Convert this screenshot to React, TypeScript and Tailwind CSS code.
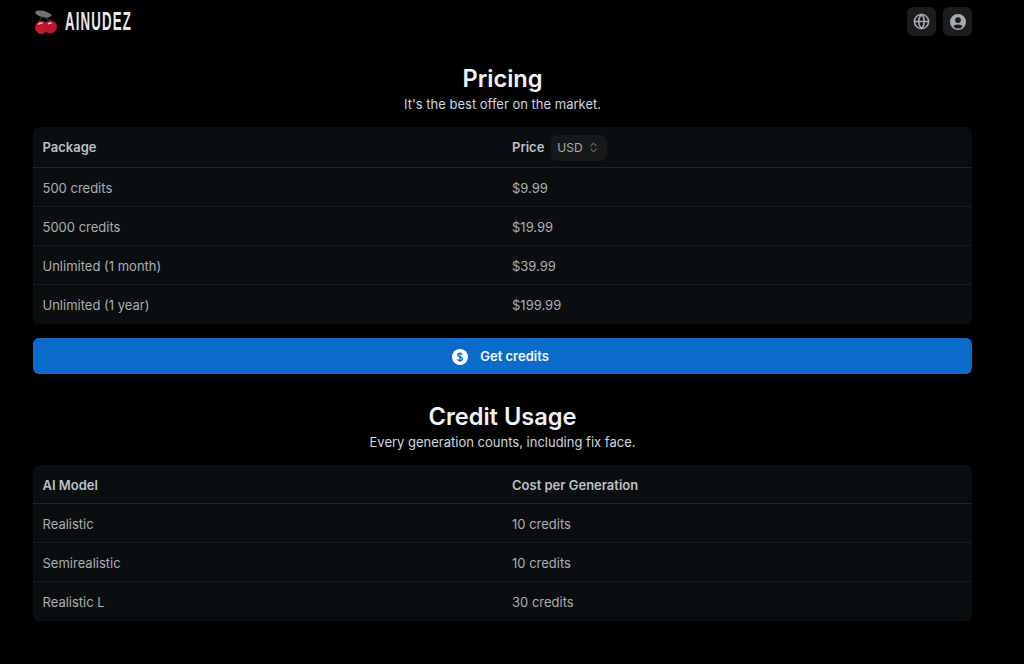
import React from "react";
import { ChevronsUpDown, Globe } from "lucide-react";

const PRICES = [
	["500 credits", "$9.99"],
	["5000 credits", "$19.99"],
	["Unlimited (1 month)", "$39.99"],
	["Unlimited (1 year)", "$199.99"],
];

const USAGE = [
	["Realistic", "10 credits"],
	["Semirealistic", "10 credits"],
	["Realistic L", "30 credits"],
];

function CherryLogo() {
	return (
		<svg width="26" height="26" viewBox="0 0 26 26" aria-hidden>
			<path d="M2 3 C6 0 14 2 19 6 C17 9 12 9 9 8 C6 7 3 6 2 3Z" fill="#6f7374" />
			<path d="M9 7 C8 9 7 11 6 13 M11 8 C14 9 17 11 18 13" stroke="#4a4c4e" strokeWidth="1" fill="none" />
			<circle cx="8.500" cy="18.500" r="6.500" fill="#c01a33" />
			<circle cx="17.500" cy="18" r="6.500" fill="#b8172e" />
			<path d="M5 15.500 C6 14.500 7.500 14 9.500 14" stroke="#eec3c8" strokeWidth="1.300" fill="none" />
			<path d="M15 15 C16 14 17 14 18.500 14" stroke="#eec3c8" strokeWidth="1.300" fill="none" />
		</svg>
	);
}

function UserCircle() {
	return (
		<svg width="16" height="16" viewBox="0 0 16 16" fill="#a7abaf" aria-hidden>
			<path
				fillRule="evenodd"
				d="M8 0a8 8 0 1 1 0 16A8 8 0 0 1 8 0Zm0 3.200a2.900 2.900 0 1 0 0 5.800 2.900 2.900 0 0 0 0-5.800ZM3.400 12.400A5.900 5.900 0 0 0 8 14.600a5.900 5.900 0 0 0 4.600-2.200c-.6-1.300-2-2-4.600-2s-4 .7-4.600 2Z"
			/>
		</svg>
	);
}

function DollarCircle() {
	return (
		<svg width="16" height="16" viewBox="0 0 16 16" aria-hidden>
			<circle cx="8" cy="8" r="8" fill="#ffffff" />
			<path
				d="M10.300 5.700C10 4.800 9.100 4.400 8 4.400c-1.300 0-2.300.6-2.300 1.700 0 2.400 4.700 1.300 4.700 3.800 0 1.100-1 1.700-2.400 1.700-1.200 0-2.100-.5-2.400-1.400M8 3.200v9.600"
				fill="none"
				stroke="#0b6bcb"
				strokeWidth="1.300"
			/>
		</svg>
	);
}

function Section({ title, subtitle, className }: { title: string; subtitle: string; className?: string }) {
	return (
		<div className={`text-center ${className ?? ""}`}>
			<h2 className="text-[23.6px] leading-[32px] font-semibold text-[#f0f4f8]">{title}</h2>
			<p className="pb-[2px] text-[13px] leading-[18px] text-[#cdd7e1]">{subtitle}</p>
		</div>
	);
}

function Table({ head, rows, headClass }: { head: React.ReactNode[]; rows: string[][]; headClass: string }) {
	return (
		<div className="rounded-md bg-[#0b0e10] text-[13px] text-[#a9aeb3]">
			<div className={`grid grid-cols-2 items-center border-b border-[#222528] font-semibold text-[#bcc1c7] ${headClass}`}>
				<div className="pl-[9.500px]">{head[0]}</div>
				<div className="pl-[9.500px]">{head[1]}</div>
			</div>
			{rows.map((row, i) => (
				<div
					key={row[0]}
					className={`grid h-[39px] grid-cols-2 items-center ${i < rows.length - 1 ? "border-b border-[#181b1d] pt-[4px]" : "pt-[2px]"}`}
				>
					<div className="pl-[9.500px]">{row[0]}</div>
					<div className="pl-[9.500px]">{row[1]}</div>
				</div>
			))}
		</div>
	);
}

export default function App() {
	return (
		<div className="min-h-[664px] bg-black pl-[33px] font-['Inter',sans-serif]">
			<div className="w-[939px]">
				<header className="flex h-[43px] items-center justify-between">
					<div className="flex items-center gap-[6px]">
						<CherryLogo />
						<span className="inline-block w-[66px] origin-left scale-x-[0.53] font-['Liberation_Sans',sans-serif] text-[25px] leading-none font-bold tracking-[2.200px] whitespace-nowrap text-[#e8e8ea]">
							AINUDEZ
						</span>
					</div>
					<div className="flex gap-[7px]">
						<button type="button" className="flex h-[29px] w-[29px] items-center justify-center rounded-md bg-[#1a1c1e] text-[#a7abaf]">
							<Globe size={17} strokeWidth={2.200} />
						</button>
						<button type="button" className="flex h-[29px] w-[29px] items-center justify-center rounded-md bg-[#1a1c1e]">
							<UserCircle />
						</button>
					</div>
				</header>

				<Section title="Pricing" subtitle="It's the best offer on the market." className="mt-[20px]" />

				<div className="mt-[12px]">
					<Table
						headClass="h-[41px] pt-[1px]"
						head={[
							"Package",
							<div key="price" className="flex items-center gap-[7px]">
								Price
								<span className="flex h-[26px] w-[56px] items-center justify-between rounded-md bg-[#16181a] pr-[7px] pl-[6px] text-[12px] font-normal text-[#a9aeb3]">
									USD
									<ChevronsUpDown size={13} strokeWidth={1.500} />
								</span>
							</div>,
						]}
						rows={PRICES}
					/>
				</div>

				<button
					type="button"
					className="mt-[14px] flex h-9 w-full items-center justify-center gap-[12px] rounded-md bg-[#0b6bcb] pt-[2px] pr-1 text-[13px] font-semibold text-[#f5f8fb]"
				>
					<DollarCircle />
					Get credits
				</button>

				<Section title="Credit Usage" subtitle="Every generation counts, including fix face." className="mt-[27px]" />

				<div className="mt-[12px]">
					<Table headClass="h-[39px] pt-[4px]" head={["AI Model", "Cost per Generation"]} rows={USAGE} />
				</div>
			</div>
		</div>
	);
}
